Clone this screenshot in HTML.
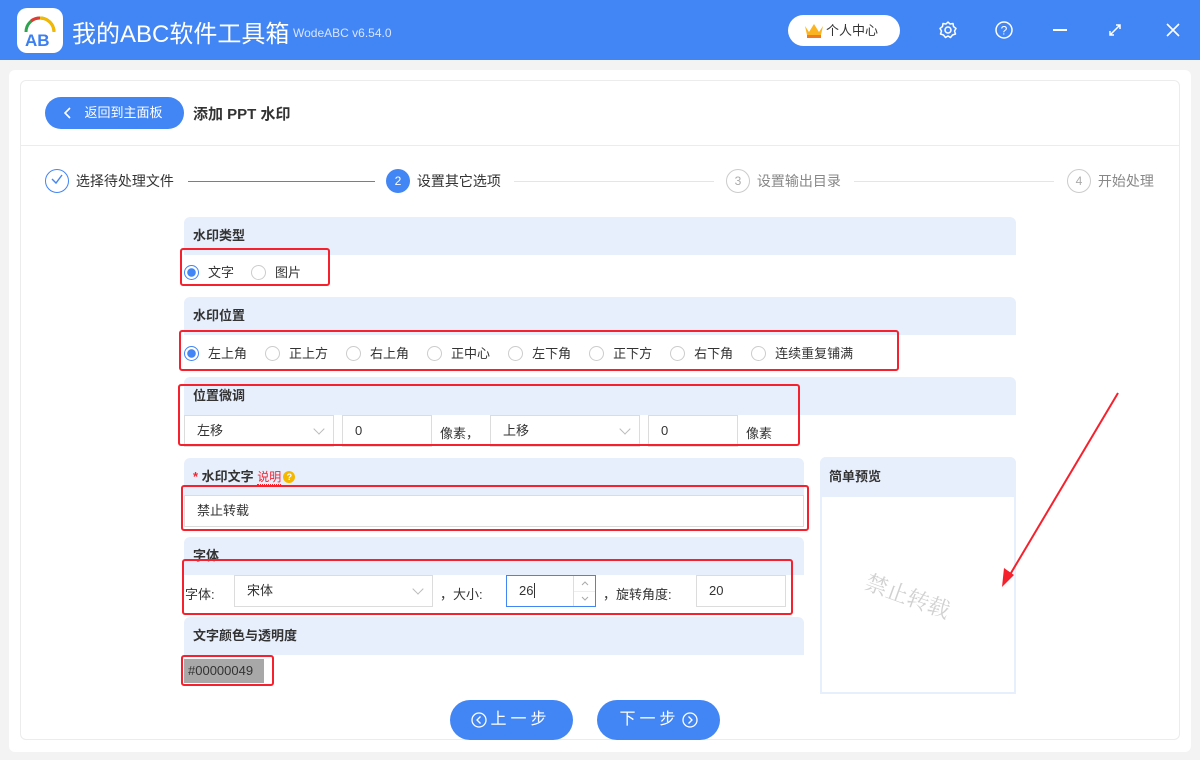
<!DOCTYPE html>
<html><head><meta charset="utf-8"><style>
*{margin:0;padding:0;box-sizing:border-box}
body{width:1200px;height:760px;background:#f3f3f3;font-family:"Liberation Sans","Noto Sans CJK SC",sans-serif;font-size:14px;color:#333;position:relative;overflow:hidden}
.a{position:absolute}
.top{left:0;top:0;width:1200px;height:60px;background:#4285f4}
.hd{background:#e8effc;border-radius:6px 6px 0 0;font-weight:bold;font-size:13px;padding-left:9px;line-height:38px}
.rb{border:2px solid #f5222d;border-radius:3px}
.radio{width:15px;height:15px;border:1px solid #ccc;border-radius:50%;display:inline-block;vertical-align:-3px;margin-right:9px;background:#fff}
.radio.on{border-color:#4285f4;background:radial-gradient(#4285f4 0 4px,#fff 4.5px)}
.row span.it{margin-right:18px}
.inp{border:1px solid #dcdcdc;background:#fff;height:32px;line-height:30px;padding-left:12px;font-size:13px}
.chev{position:absolute;right:10px;top:9px;width:8px;height:8px;border-right:1px solid #bbb;border-bottom:1px solid #bbb;transform:rotate(45deg)}
.btn{background:#4285f4;color:#fff;border-radius:20px;height:40px;line-height:40px;text-align:center;font-size:16px;letter-spacing:4px}
.step{font-size:14px;color:#333}
.circ{width:24px;height:24px;border-radius:50%;display:inline-block;text-align:center;line-height:22px;font-size:12px}
</style></head><body>
<div class="a top"></div>
<div class="a" style="left:17px;top:8px;width:46px;height:45px;background:#fff;border-radius:10px">
<svg width="46" height="45" viewBox="0 0 46 45"><path d="M9 24 A14 14 0 0 1 37 24" fill="none" stroke="#2ea44f" stroke-width="3"/><path d="M23 10 A14 14 0 0 1 37 24" fill="none" stroke="#f5b800" stroke-width="3"/><path d="M14 13 A14 14 0 0 1 23 10" fill="none" stroke="#e53935" stroke-width="3"/><text x="8" y="38" font-size="17" font-weight="bold" fill="#3b7ff0" font-family="Liberation Sans">AB</text></svg></div>
<div class="a" style="left:72px;top:14px;color:#fff;font-size:24px">我的ABC软件工具箱</div>
<div class="a" style="left:293px;top:26px;color:#d8e5ff;font-size:12px">WodeABC v6.54.0</div>
<div class="a" style="left:788px;top:15px;width:112px;height:31px;background:#fff;border-radius:16px;line-height:31px;font-size:13px;padding-left:38px">个人中心</div>
<div class="a" style="left:804px;top:22px;width:20px;height:16px"><svg width="20" height="16"><path d="M1 4 L5 10 L10 2 L15 10 L19 4 L17 13 H3Z" fill="#fbb421"/><rect x="3" y="13" width="14" height="3" fill="#f07a1e"/></svg></div>
<svg class="a" style="left:938px;top:20px" width="20" height="20" viewBox="0 0 20 20"><circle cx="10" cy="10" r="3" fill="none" stroke="#fff" stroke-width="1.5"/><path d="M10 2 L12 4 L15 3.5 L15.5 6.5 L18 8.5 L16.5 11 L17.5 14 L14.5 15 L12.5 17.5 L10 16 L7.5 17.5 L5.5 15 L2.5 14 L3.5 11 L2 8.5 L4.5 6.5 L5 3.5 L8 4Z" fill="none" stroke="#fff" stroke-width="1.5" stroke-linejoin="round"/></svg>
<svg class="a" style="left:994px;top:20px" width="20" height="20"><circle cx="10" cy="10" r="8" fill="none" stroke="#fff" stroke-width="1.5"/><text x="10" y="14.5" font-size="12" fill="#fff" text-anchor="middle" font-family="Liberation Sans">?</text></svg>
<div class="a" style="left:1053px;top:29px;width:14px;height:2px;background:#fff"></div>
<svg class="a" style="left:1108px;top:23px" width="14" height="14"><path d="M2 12 L12 2 M8 2 H12 V6 M2 8 V12 H6" fill="none" stroke="#fff" stroke-width="1.5"/></svg>
<svg class="a" style="left:1165px;top:22px" width="16" height="16"><path d="M2 2 L14 14 M14 2 L2 14" stroke="#fff" stroke-width="1.6"/></svg>

<div class="a" style="left:9px;top:70px;width:1182px;height:682px;background:#fff;border-radius:6px"></div>
<div class="a" style="left:20px;top:80px;width:1160px;height:660px;border:1px solid #ececec;border-radius:6px"></div>
<div class="a" style="left:20px;top:145px;width:1160px;height:1px;background:#ececec"></div>
<div class="a btn" style="left:45px;top:97px;width:139px;height:32px;line-height:32px;font-size:13px;letter-spacing:0;border-radius:16px;padding-left:18px">返回到主面板</div>
<svg class="a" style="left:62px;top:106px" width="10" height="14"><path d="M8 2 L3 7 L8 12" fill="none" stroke="#fff" stroke-width="1.6"/></svg>
<div class="a" style="left:193px;top:103px;font-size:15px;font-weight:bold">添加 PPT 水印</div>

<div class="a step" style="left:45px;top:169px"><span class="circ" style="border:1px solid #4285f4;vertical-align:middle"><svg width="14" height="12"><path d="M2 6 L6 10 L12 2" fill="none" stroke="#4285f4" stroke-width="1.4"/></svg></span> <span style="vertical-align:middle;margin-left:3px">选择待处理文件</span></div>
<div class="a" style="left:188px;top:181px;width:187px;height:1px;background:#4285f4"></div>
<div class="a step" style="left:386px;top:169px"><span class="circ" style="background:#4285f4;color:#fff;vertical-align:middle;line-height:24px">2</span> <span style="vertical-align:middle;margin-left:3px">设置其它选项</span></div>
<div class="a" style="left:514px;top:181px;width:200px;height:1px;background:#e5e5e5"></div>
<div class="a step" style="left:726px;top:169px;color:#888"><span class="circ" style="border:1px solid #ccc;color:#aaa;vertical-align:middle">3</span> <span style="vertical-align:middle;margin-left:3px">设置输出目录</span></div>
<div class="a" style="left:854px;top:181px;width:200px;height:1px;background:#e5e5e5"></div>
<div class="a step" style="left:1067px;top:169px;color:#888"><span class="circ" style="border:1px solid #ccc;color:#aaa;vertical-align:middle">4</span> <span style="vertical-align:middle;margin-left:3px">开始处理</span></div>

<div class="a hd" style="left:184px;top:217px;width:832px;height:38px">水印类型</div>
<div class="a row" style="left:184px;top:262px;font-size:13px"><span class="radio on"></span><span class="it" style="margin-right:17px">文字</span><span class="radio"></span>图片</div>
<div class="a hd" style="left:184px;top:297px;width:832px;height:38px">水印位置</div>
<div class="a row" style="left:184px;top:343px;font-size:13px"><span class="radio on"></span><span class="it">左上角</span><span class="radio"></span><span class="it">正上方</span><span class="radio"></span><span class="it">右上角</span><span class="radio"></span><span class="it">正中心</span><span class="radio"></span><span class="it">左下角</span><span class="radio"></span><span class="it">正下方</span><span class="radio"></span><span class="it">右下角</span><span class="radio"></span>连续重复铺满</div>
<div class="a hd" style="left:184px;top:377px;width:832px;height:38px">位置微调</div>
<div class="a inp" style="left:184px;top:415px;width:150px">左移<i class="chev"></i></div>
<div class="a inp" style="left:342px;top:415px;width:90px">0</div>
<div class="a" style="left:440px;top:423px;font-size:13px">像素，</div>
<div class="a inp" style="left:490px;top:415px;width:150px">上移<i class="chev"></i></div>
<div class="a inp" style="left:648px;top:415px;width:90px">0</div>
<div class="a" style="left:746px;top:423px;font-size:13px">像素</div>

<div class="a hd" style="left:184px;top:458px;width:620px;height:38px"><span style="color:#f5222d">*</span> 水印文字 <span style="color:#f5222d;font-weight:normal;font-size:12px;border-bottom:1px dotted #f5222d">说明</span><span style="display:inline-block;width:12px;height:12px;border-radius:50%;background:#f5b800;color:#fff;font-size:9px;line-height:12px;text-align:center;vertical-align:1px;margin-left:2px">?</span></div>
<div class="a inp" style="left:184px;top:495px;width:620px;height:32px">禁止转载</div>
<div class="a hd" style="left:184px;top:537px;width:620px;height:38px">字体</div>
<div class="a" style="left:185px;top:584px;font-size:13px">字体:</div>
<div class="a inp" style="left:234px;top:575px;width:199px">宋体<i class="chev"></i></div>
<div class="a" style="left:440px;top:584px;font-size:13px">，大小:</div>
<div class="a inp" style="left:506px;top:575px;width:90px;border-color:#4285f4">26<span style="border-left:1px solid #333;margin-left:1px"></span></div>
<div class="a" style="left:573px;top:576px;width:1px;height:30px;background:#ddd"></div>
<div class="a" style="left:574px;top:591px;width:21px;height:1px;background:#eee"></div>
<svg class="a" style="left:579px;top:579px" width="12" height="24"><path d="M3 6 L6 3 L9 6 M3 18 L6 21 L9 18" fill="none" stroke="#aaa" stroke-width="1"/></svg>
<div class="a" style="left:603px;top:584px;font-size:13px">，旋转角度:</div>
<div class="a inp" style="left:696px;top:575px;width:90px">20</div>
<div class="a hd" style="left:184px;top:617px;width:620px;height:38px">文字颜色与透明度</div>
<div class="a" style="left:184px;top:659px;width:80px;height:24px;background:#a8a8a8;font-size:13px;line-height:24px;padding-left:4px;color:#333">#00000049</div>

<div class="a" style="left:820px;top:457px;width:196px;height:237px;border:2px solid #e8effc;border-radius:6px 6px 0 0"></div>
<div class="a hd" style="left:820px;top:457px;width:196px;height:40px;line-height:40px">简单预览</div>
<div class="a" style="left:872px;top:566px;font-size:22px;color:#d0d0d0;font-family:'Liberation Serif','Noto Serif CJK SC',serif;transform:rotate(20deg);transform-origin:0 0">禁止转载</div>

<div class="a btn" style="left:450px;top:700px;width:123px;padding-left:18px">上一步</div>
<div class="a btn" style="left:597px;top:700px;width:123px;padding-right:18px">下一步</div>
<svg class="a" style="left:470px;top:711px" width="18" height="18"><circle cx="9" cy="9" r="7" fill="none" stroke="#fff" stroke-width="1.3"/><path d="M10.5 5.5 L7 9 L10.5 12.5" fill="none" stroke="#fff" stroke-width="1.3"/></svg>
<svg class="a" style="left:681px;top:711px" width="18" height="18"><circle cx="9" cy="9" r="7" fill="none" stroke="#fff" stroke-width="1.3"/><path d="M7.5 5.5 L11 9 L7.5 12.5" fill="none" stroke="#fff" stroke-width="1.3"/></svg>

<div class="a rb" style="left:180px;top:248px;width:150px;height:38px"></div>
<div class="a rb" style="left:179px;top:330px;width:720px;height:41px"></div>
<div class="a rb" style="left:178px;top:384px;width:622px;height:62px"></div>
<div class="a rb" style="left:181px;top:485px;width:628px;height:46px"></div>
<div class="a rb" style="left:182px;top:559px;width:611px;height:56px"></div>
<div class="a rb" style="left:181px;top:655px;width:93px;height:31px"></div>
<svg class="a" style="left:0;top:0" width="1200" height="760"><path d="M1118 393 L1008 578" stroke="#f5222d" stroke-width="2"/><path d="M1002 587 L1004 568 L1014 575Z" fill="#f5222d"/></svg>
</body></html>
